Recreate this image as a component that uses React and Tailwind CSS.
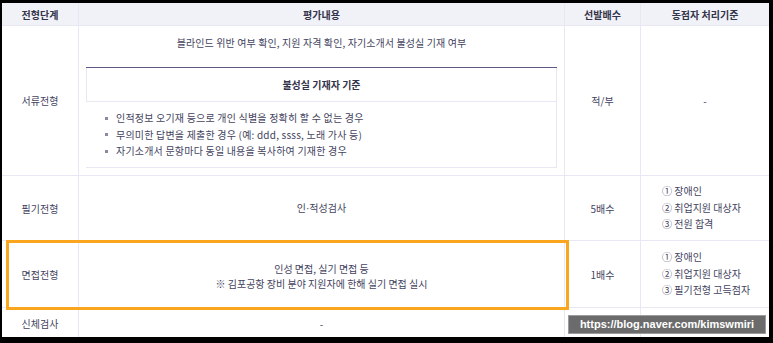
import React from "react";

const font = { fontFamily: '"Noto Sans CJK KR", "Noto Sans", sans-serif' };

function Cell({ children, className = "" }) {
  return (
    <div className={`border-r border-b border-[#e8e8f4] flex items-center justify-center text-center ${className}`}>
      {children}
    </div>
  );
}

export default function App() {
  return (
    <div className="w-[773px] h-[343px] bg-black overflow-hidden pt-[3px] pl-[2px]">
      <div
        className="relative w-[767px] h-[334px] bg-white overflow-hidden text-[10px] text-[#444360]"
        style={font}
      >
        <div className="grid grid-cols-[77px_486px_76px_128px] grid-rows-[23px_150px_65px_67px_40px]">
          {/* header */}
          <Cell className="bg-[#f1f2f8] font-bold text-[#33334a]">전형단계</Cell>
          <Cell className="bg-[#f1f2f8] font-bold text-[#33334a]">평가내용</Cell>
          <Cell className="bg-[#f1f2f8] font-bold text-[#33334a]">선발배수</Cell>
          <Cell className="bg-[#f1f2f8] font-bold text-[#33334a] border-r-0">동점자 처리기준</Cell>

          {/* row 1 */}
          <Cell>서류전형</Cell>
          <div className="border-r border-b border-[#e8e8f4] flex flex-col pl-[7px] pr-[7px] pt-[10px]">
            <div className="text-center leading-[14px] tracking-[0.1px]">블라인드 위반 여부 확인, 지원 자격 확인, 자기소개서 불성실 기재 여부</div>
            <div className="mt-[17px] border-t-[1.5px] border-[#5d5984] flex flex-col">
              <div className="h-[34px] border-x border-b border-[#e8e8f4] flex items-center justify-center font-bold text-[#33334a]">
                불성실 기재자 기준
              </div>
              <div className="h-[66px] border-r border-b border-[#e8e8f4] pl-[19px] pt-[8px] leading-[16.5px] tracking-[0.2px]">
                <ul className="flex flex-col">
                  {[
                    "인적정보 오기재 등으로 개인 식별을 정확히 할 수 없는 경우",
                    "무의미한 답변을 제출한 경우 (예: ddd, ssss, 노래 가사 등)",
                    "자기소개서 문항마다 동일 내용을 복사하여 기재한 경우",
                  ].map((t) => (
                    <li key={t} className="flex items-center gap-[8px]">
                      <span className="w-[3px] h-[3px] bg-[#8a8aa0] inline-block" />
                      <span>{t}</span>
                    </li>
                  ))}
                </ul>
              </div>
            </div>
          </div>
          <Cell>적/부</Cell>
          <Cell className="border-r-0">-</Cell>

          {/* row 2 */}
          <Cell>필기전형</Cell>
          <Cell>
            <span>
              인<span style={{ fontFamily: '"Liberation Sans", Arial, sans-serif' }}>·</span>적성검사
            </span>
          </Cell>
          <Cell>5배수</Cell>
          <div className="border-b border-[#e8e8f4] flex flex-col justify-center pl-[21px] leading-[16.5px]">
            <div>① 장애인</div>
            <div>② 취업지원 대상자</div>
            <div>③ 전원 합격</div>
          </div>

          {/* row 3 */}
          <Cell>면접전형</Cell>
          <Cell>
            <div className="leading-[15px] mt-[3px]">
              <div>인성 면접, 실기 면접 등</div>
              <div>※ 김포공항 장비 분야 지원자에 한해 실기 면접 실시</div>
            </div>
          </Cell>
          <Cell>1배수</Cell>
          <div className="border-b border-[#e8e8f4] flex flex-col justify-center pl-[21px] leading-[16.5px]">
            <div>① 장애인</div>
            <div>② 취업지원 대상자</div>
            <div>③ 필기전형 고득점자</div>
          </div>

          {/* row 4 */}
          <Cell className="items-start pt-[8px]">신체검사</Cell>
          <Cell className="items-start pt-[8px]">-</Cell>
          <Cell className="items-start pt-[8px]">-</Cell>
          <Cell className="items-start pt-[8px] border-r-0"></Cell>
        </div>

        {/* highlight box */}
        <div className="absolute left-[4px] top-[237px] w-[563px] h-[70px] border-[3px] border-[#f9a51e]" />

        {/* watermark */}
        <div
          className="absolute left-[566px] top-[312px] w-[198px] h-[19px] bg-[#6b6b6b] border border-[#9c9c9c] flex items-center justify-center text-white font-bold text-[11px]"
          style={{ fontFamily: '"Liberation Sans", Arial, sans-serif' }}
        >
          https://blog.naver.com/kimswmiri
        </div>
      </div>
    </div>
  );
}
